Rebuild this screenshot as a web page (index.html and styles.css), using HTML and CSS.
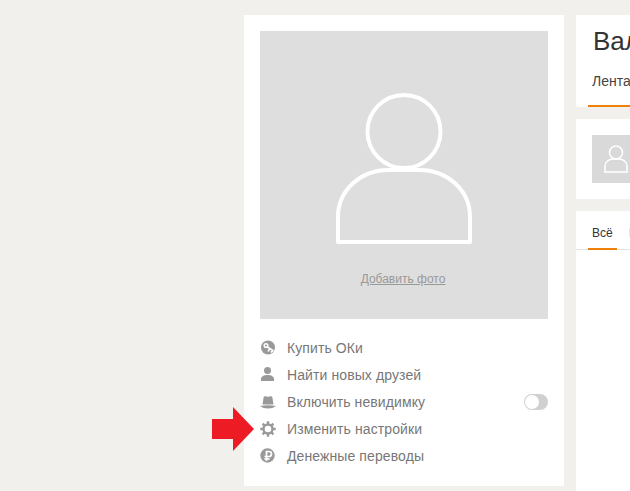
FILE: index.html
```html
<!DOCTYPE html>
<html lang="ru">
<head>
<meta charset="utf-8">
<title>Профиль</title>
<link rel="stylesheet" href="styles.css">
</head>
<body>
<div class="page">
  <aside class="profile">
    <div class="photo">
      <svg class="silhouette" width="136" height="151" viewBox="0 0 136 151">
        <circle cx="68" cy="38.500" r="36.500" fill="none" stroke="#fff" stroke-width="4"/>
        <path d="M2 149V124C2 96 26 77 52 77H84C110 77 134 96 134 124V149Z" fill="none" stroke="#fff" stroke-width="4" stroke-linejoin="round"/>
      </svg>
      <a class="add-photo" href="#">Добавить фото</a>
    </div>
    <ul class="menu">
      <li class="menu-item">
        <svg class="icon" width="16" height="16" viewBox="0 0 16 16"><circle cx="8" cy="7.500" r="7" fill="#999"/><circle cx="6" cy="5.500" r="1.800" fill="none" stroke="#fff" stroke-width="1.500"/><path d="M7.500 7 13.500 11M10 8.500 8 11.500M12.500 10.500 11 12.500" stroke="#fff" stroke-width="1.600" fill="none"/></svg>
        <span>Купить ОКи</span>
      </li>
      <li class="menu-item">
        <svg class="icon icon-up" width="16" height="16" viewBox="0 0 16 16"><circle cx="7.500" cy="4.500" r="3.500" fill="#999"/><path d="M1 15V13C1 10.500 4 9 7.500 9S14 10.500 14 13V15Z" fill="#999"/></svg>
        <span>Найти новых друзей</span>
      </li>
      <li class="menu-item">
        <svg class="icon" width="16" height="16" viewBox="0 0 16 16"><path d="M2.500 10.500 3.500 4C3.700 2.500 4.500 2 5.500 2.200 6.500 2.400 7 2.800 8 2.800S9.500 2.400 10.500 2.200C11.500 2 12.300 2.500 12.500 4L13.500 10.500Z" fill="#999"/><path d="M0 12Q8 10.500 16 12 13 14.500 8 14.500T0 12Z" fill="#999"/></svg>
        <span>Включить невидимку</span>
        <span class="toggle"><span class="knob"></span></span>
      </li>
      <li class="menu-item">
        <svg class="icon" width="16" height="16" viewBox="0 0 16 16"><circle cx="8" cy="8" r="4.500" fill="none" stroke="#999" stroke-width="2.400"/><path d="M8 .3V15.700M.3 8H15.700M2.600 2.600 13.400 13.400M13.400 2.600 2.600 13.400" stroke="#999" stroke-width="2.400"/><circle cx="8" cy="8" r="3.300" fill="#fff"/></svg>
        <span>Изменить настройки</span>
      </li>
      <li class="menu-item">
        <svg class="icon" width="16" height="16" viewBox="0 0 16 16"><circle cx="7.500" cy="7.500" r="7.200" fill="#999"/><path d="M6.500 13V3.500H9A2.500 2.500 0 0 1 9 8.500H4.500M4.500 10.800H9.500" fill="none" stroke="#fff" stroke-width="1.700"/></svg>
        <span>Денежные переводы</span>
      </li>
    </ul>
    <svg class="arrow" width="42" height="44" viewBox="0 0 42 44"><path d="M0 12H21V0L42 22 21 44V32H0Z" fill="#ed1c24"/></svg>
  </aside>
  <main class="content">
    <section class="card head-card">
      <h1 class="name">Валентина</h1>
      <nav class="tabs"><span class="tab active">Лента</span></nav>
    </section>
    <section class="card post-card">
      <div class="avatar">
        <svg width="24" height="28" viewBox="0 0 24 28"><circle cx="12" cy="7.500" r="6.500" fill="none" stroke="#fff" stroke-width="1.500"/><path d="M1 27V21C1 17 5 14 9 14H15C19 14 23 17 23 21V27Z" fill="none" stroke="#fff" stroke-width="1.500"/></svg>
      </div>
    </section>
    <section class="card feed-card">
      <nav class="feed-tabs"><span class="feed-tab active">Всё</span><span class="feed-tab">Публикации</span></nav>
    </section>
  </main>
</div>
</body>
</html>
```
FILE: styles.css
```css
* { box-sizing: border-box; }
html, body { margin: 0; height: 100%; overflow: hidden; }
body { background: #f1f0ed; font-family: "Liberation Sans", Arial, sans-serif; color: #666; }
.page { display: flex; gap: 12px; width: 900px; padding: 15px 0 0 244px; }
.profile { position: relative; flex: none; width: 320px; height: 471px; padding: 16px; background: #fff; }
.photo { position: relative; display: flex; flex-direction: column; align-items: center; height: 288px; padding-top: 62px; background: #dedede; }
.silhouette { display: block; }
.add-photo { margin: 28px 2px 0 0; font-size: 12px; line-height: 14px; color: #999; text-decoration: underline; }
.menu { list-style: none; margin: 15px 0 0; padding: 0; }
.menu-item { display: flex; align-items: center; height: 27px; font-size: 14px; letter-spacing: .1px; color: #777; }
.icon { flex: none; margin-right: 11px; }
.icon-up { margin-top: -2px; }
.toggle { position: relative; width: 24px; height: 16px; margin-left: auto; border-radius: 8px; background: #d0d0d0; }
.knob { position: absolute; top: 1px; left: 1px; width: 14px; height: 14px; border-radius: 50%; background: #fff; }
.arrow { position: absolute; left: -32px; top: 392px; }
.content { flex: none; width: 300px; display: flex; flex-direction: column; gap: 12px; }
.card { background: #fff; }
.head-card { height: 92px; padding: 11px 12px 0 17px; }
.name { margin: 0; font-size: 26px; font-weight: 400; line-height: 30px; color: #333; }
.tabs { display: flex; margin: 17px 0 0 -5px; }
.tab { height: 34px; padding: 0 60px 0 4px; font-size: 14px; line-height: 16px; color: #444; border-bottom: 2px solid #ee8208; }
.post-card { height: 80px; padding: 16px; }
.avatar { display: flex; align-items: center; justify-content: center; width: 48px; height: 48px; background: #d9d9d9; }
.feed-card { height: 300px; }
.feed-tabs { display: flex; gap: 12px; height: 39px; padding-left: 12px; border-bottom: 1px solid #e4e4e4; }
.feed-tab { height: 39px; padding-top: 15px; font-size: 12px; line-height: 14px; color: #333; }
.feed-tab.active { width: 29px; padding-left: 4px; border-bottom: 2px solid #ee8208; }
```
